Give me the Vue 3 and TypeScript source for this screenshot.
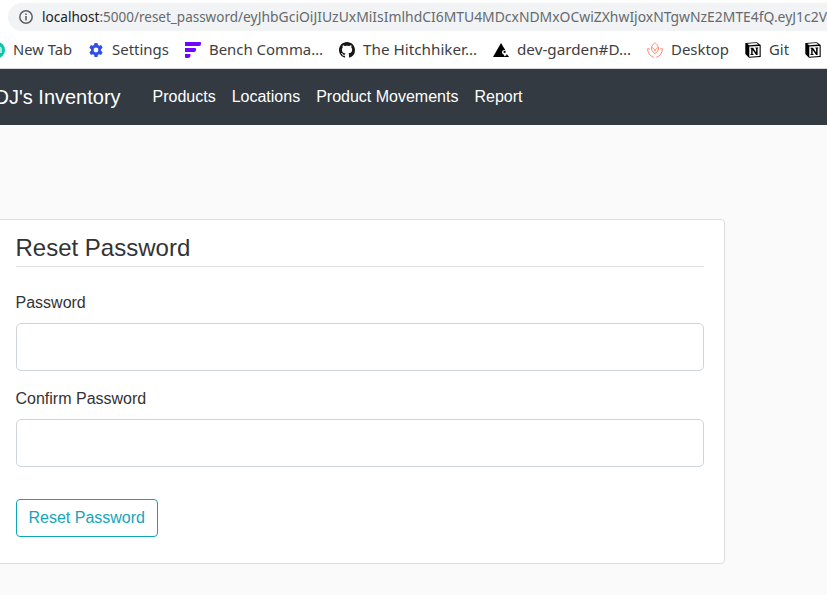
<script setup lang="ts">
import { ref } from 'vue'

interface Bookmark {
  icon: string
  label: string
  width: number
}

const bookmarks: Bookmark[] = [
  { icon: 'tab', label: 'New Tab', width: 59 },
  { icon: 'gear', label: 'Settings', width: 57 },
  { icon: 'bench', label: 'Bench Comma…', width: 114 },
  { icon: 'github', label: 'The Hitchhiker…', width: 114 },
  { icon: 'garden', label: 'dev-garden#D…', width: 114 },
  { icon: 'lotus', label: 'Desktop', width: 58 },
  { icon: 'notion', label: 'Git', width: 20 },
  { icon: 'notion', label: '', width: 0 },
]

const links: string[] = ['Products', 'Locations', 'Product Movements', 'Report']
const password = ref('')
const confirmation = ref('')
</script>

<template>
  <div class="window">
    <header class="browser">
      <div class="address">
        <svg class="info" viewBox="0 0 16 16">
          <circle cx="8" cy="8" r="6.2" fill="none" stroke="#5f6368" stroke-width="1.5" />
          <path d="M7.2 7h1.6v4.4H7.2zM7.2 4.5h1.6v1.6H7.2z" fill="#5f6368" />
        </svg>
        <svg class="url" width="785" height="28">
          <text class="host" x="0" y="19" textLength="57.5" lengthAdjust="spacingAndGlyphs">localhost</text>
          <text class="path" x="57.5" y="19" textLength="143.500" lengthAdjust="spacingAndGlyphs">:5000/reset_password/</text>
          <text class="path" x="201" y="19" textLength="584" lengthAdjust="spacingAndGlyphs">eyJhbGciOiJIUzUxMiIsImlhdCI6MTU4MDcxNDMxOCwiZXhwIjoxNTgwNzE2MTE4fQ.eyJ1c2V</text>
        </svg>
      </div>
      <div class="bookmarks">
        <div v-for="(b, i) in bookmarks" :key="i" class="bookmark">
          <svg class="icon" viewBox="0 0 16 16">
            <template v-if="b.icon === 'tab'">
              <circle cx="8" cy="8" r="8" fill="#05c8a8" />
              <path d="M4.5 11V6.5q0-1.5 1.500-1.500h4.500q1.500 0 1.500 1.500V11" fill="none" stroke="#fff" stroke-width="1.3" />
            </template>
            <template v-else-if="b.icon === 'gear'">
              <path
                fill="#304ee8"
                fill-rule="evenodd"
                d="M6.500 1h3l.4 2.100 1.200.7 2-.7 1.500 2.600-1.600 1.500v1.600l1.600 1.500-1.500 2.600-2-.7-1.200.7-.4 2.100h-3l-.4-2.100-1.200-.7-2 .7-1.500-2.600L3 8.800V7.200L1.400 5.700l1.500-2.600 2 .7 1.200-.7zM8 5.600a2.400 2.400 0 1 0 0 4.800 2.400 2.400 0 0 0 0-4.800z"
              />
            </template>
            <template v-else-if="b.icon === 'bench'">
              <path d="M0 0h15.200q.8 0 .8.8V2q0 2-2 2H0z" fill="#7205ff" />
              <path d="M0 6h10.200q.8 0 .8.8V8q0 2-2 2H0z" fill="#7205ff" />
              <path d="M0 12h4.800q.7 0 .7.8 0 3.200-2.500 3.200H1q-1 0-1-1z" fill="#7205ff" />
            </template>
            <template v-else-if="b.icon === 'github'">
              <path
                fill="#161616"
                d="M8 0C3.580 0 0 3.580 0 8c0 3.540 2.290 6.530 5.470 7.590.4.070.55-.17.55-.38 0-.19-.01-.82-.01-1.490-2.010.37-2.530-.49-2.690-.94-.09-.23-.48-.94-.82-1.130-.28-.15-.68-.52-.01-.53.63-.01 1.080.58 1.230.82.72 1.210 1.870.87 2.330.66.070-.52.28-.87.51-1.070-1.780-.2-3.640-.89-3.640-3.950 0-.87.31-1.590.82-2.150-.08-.2-.36-1.020.08-2.120 0 0 .67-.21 2.200.82.64-.18 1.320-.27 2-.27s1.360.09 2 .27c1.530-1.040 2.200-.82 2.200-.82.44 1.100.16 1.920.08 2.120.51.56.82 1.270.82 2.150 0 3.070-1.870 3.750-3.650 3.950.29.25.54.73.54 1.480 0 1.070-.01 1.930-.01 2.200 0 .21.15.46.55.38A8.010 8.010 0 0 0 16 8c0-4.420-3.580-8-8-8z"
              />
            </template>
            <template v-else-if="b.icon === 'garden'">
              <path d="M8 1l4.500 7.500L9.500 15H0z" fill="#000" />
              <path d="M8 12l8 3H7z" fill="#000" />
              <circle cx="11.300" cy="10.300" r="2.300" fill="#fff" />
              <circle cx="11.600" cy="9.900" r="1.100" fill="#000" />
              <path d="M13.800 12L16 15h-3.500z" fill="#000" />
              <circle cx="11.700" cy="13.600" r=".7" fill="#fff" />
            </template>
            <template v-else-if="b.icon === 'lotus'">
              <g fill="none" stroke="#ff8a70" stroke-width="1">
                <path d="M4.800 4.800C5.500 2.500 8 .7 8 .7s2.500 1.800 3.200 4.100" />
                <path d="M8 11.500C5.200 10 4.300 7.800 4.400 5.100 6.500 6 7.600 7.200 8 9c.4-1.800 1.500-3 3.600-3.900.1 2.700-.8 4.900-3.600 6.400z" />
                <path d="M2.900 7L.6 6.700c.1 4.200 2.200 7.400 6.200 8.700M13.100 7l2.300-.3c-.1 4.200-2.200 7.400-6.200 8.700" />
              </g>
            </template>
            <template v-else>
              <path d="M.3.900L11.800.2 15.700 3v12L4 15.800.3 12z" fill="#000" />
              <path d="M2.200 1.700l9.200-.6 2.100 1.500-9.300.6zM4.300 4.500l10.300-.6v10.200l-10.300.6z" fill="#fff" />
              <path d="M5.500 5.700h2.600l3 4.700V6.500l-.8-.2v-.8H13.300v.8l-.7.2v6.600h-1.500L7.600 7.900v4l.9.200v.9H5.500v-.9l.7-.2V6.800l-.7-.2z" fill="#000" />
            </template>
          </svg>
          <svg v-if="b.label" class="label" :width="b.width" height="24">
            <text x="0" y="17" :textLength="b.width" lengthAdjust="spacingAndGlyphs">{{ b.label }}</text>
          </svg>
        </div>
      </div>
    </header>
    <nav class="navbar">
      <a class="brand">DJ's Inventory</a>
      <a v-for="link in links" :key="link" class="link">{{ link }}</a>
    </nav>
    <main>
      <form class="card" @submit.prevent>
        <h1>Reset Password</h1>
        <label for="password">Password</label>
        <input id="password" v-model="password" type="password" />
        <label for="confirmation">Confirm Password</label>
        <input id="confirmation" v-model="confirmation" type="password" />
        <button type="submit">Reset Password</button>
      </form>
    </main>
  </div>
</template>

<style>
body {
  margin: 0;
  overflow: hidden;
}
</style>

<style scoped>
.window,
.window * {
  box-sizing: border-box;
}
.window {
  width: 827px;
  height: 595px;
  overflow: hidden;
  background: #fafafa;
  color: #333;
  font: 16px/24px "Liberation Sans", Arial, sans-serif;
}
.browser {
  height: 69px;
  padding-top: 3px;
  background: #fff;
  border-bottom: 1px solid #d5d6d8;
}
.address {
  display: flex;
  align-items: center;
  height: 28px;
  margin-left: 8px;
  padding-left: 10px;
  gap: 8px;
  border-radius: 14px 0 0 14px;
  background: #f1f3f4;
  overflow: hidden;
}
.info,
.icon {
  flex: none;
  width: 16px;
  height: 16px;
}
.url,
.label {
  flex: none;
  display: block;
  overflow: visible;
  font-family: "Noto Sans", sans-serif;
  font-size: 14px;
}
.host {
  fill: #202124;
}
.path {
  fill: #666a6e;
}
.bookmarks {
  display: flex;
  gap: 16px;
  margin: 7px 0 0 -11px;
}
.bookmark {
  display: flex;
  flex: none;
  align-items: center;
  height: 24px;
  gap: 8px;
}
.label {
  fill: #3c4043;
}
.navbar {
  display: flex;
  align-items: center;
  height: 56px;
  margin-left: -5.5px;
  background: #333a41;
  color: #fff;
  white-space: nowrap;
}
.brand {
  width: 126px;
  margin-right: 24px;
  font-size: 20px;
}
.link {
  padding: 0 8px;
}
main {
  padding-top: 94px;
}
.card {
  width: 730px;
  height: 345px;
  margin-left: -5px;
  padding: 14px 20px;
  border: 1px solid #ddd;
  border-radius: 4px;
  background: #fff;
}
h1 {
  height: 33px;
  margin: 0 0 24px;
  border-bottom: 1px solid #dee2e6;
  font-size: 24px;
  font-weight: 400;
  line-height: 27px;
  text-indent: -0.5px;
}
label {
  display: block;
  margin-bottom: 8px;
  text-indent: -0.5px;
}
input {
  display: block;
  width: 100%;
  height: 48px;
  margin: 0 0 16px;
  padding: 8px 16px;
  border: 1px solid #ced4da;
  border-radius: 5px;
  background: #fff;
  outline: 0;
}
button {
  width: 142px;
  height: 38px;
  margin-top: 16px;
  padding: 0;
  border: 1px solid #0fa5b9;
  border-radius: 4px;
  background: transparent;
  color: #12a5bb;
  font: inherit;
  text-indent: -0.5px;
}
</style>
